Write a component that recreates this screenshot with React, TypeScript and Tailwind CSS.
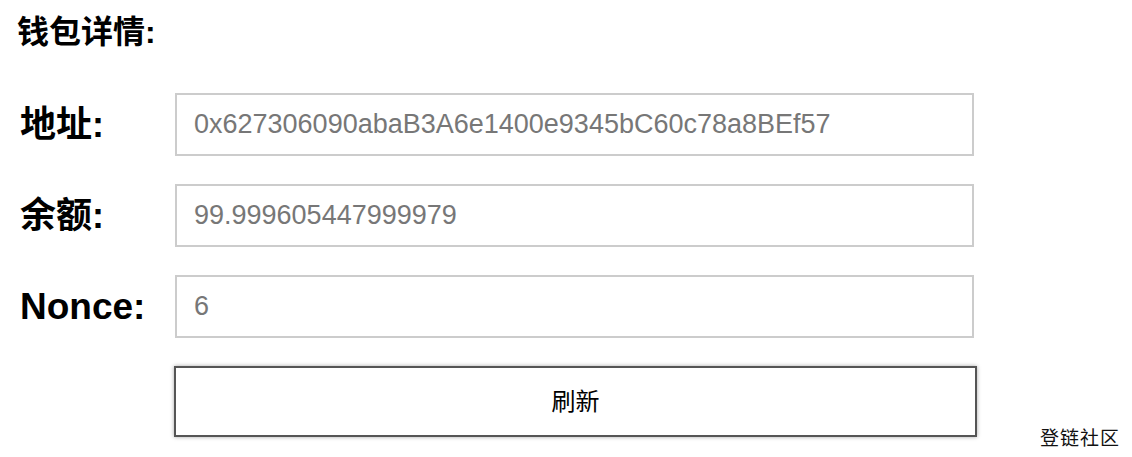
import React from "react";

const sans = "font-['Liberation_Sans','Noto_Sans_CJK_SC',sans-serif]";

function Row({ label, value, cjk }: { label: string; value: string; cjk?: boolean }) {
  return (
    <div className="flex items-center h-[63px]">
      <div
        className={`w-[175px] pl-[20px] font-bold text-black ${cjk ? "text-[36px]" : "text-[37px]"} leading-none`}
      >
        {label}
      </div>
      <input
        readOnly
        value={value}
        className={`w-[799px] h-[63px] border-2 border-[#cccccc] bg-white px-[17px] text-[27px] text-[#777777] outline-none ${sans}`}
      />
    </div>
  );
}

export default function App() {
  return (
    <div className={`relative w-[1132px] h-[457px] bg-white overflow-hidden ${sans}`}>
      <h2 className="pl-[17px] pt-[12px] text-[32px] font-bold leading-[40px] text-black">钱包详情:</h2>
      <div className="mt-[41px] flex flex-col gap-[28px]">
        <Row label="地址:" value="0x627306090abaB3A6e1400e9345bC60c78a8BEf57" cjk />
        <Row label="余额:" value="99.999605447999979" cjk />
        <Row label="Nonce:" value="6" />
        <div className="flex">
          <button className="ml-[174px] w-[803px] h-[71px] border-2 border-[#555555] bg-white text-[24px] text-black shadow-[0_0_4px_rgba(0,0,0,0.35)]">
            刷新
          </button>
        </div>
      </div>
      <div className="absolute right-[12px] bottom-[6px] text-[19px] tracking-[1px] text-[#111] font-['Noto_Sans_CJK_SC',serif]">
        登链社区
      </div>
    </div>
  );
}
